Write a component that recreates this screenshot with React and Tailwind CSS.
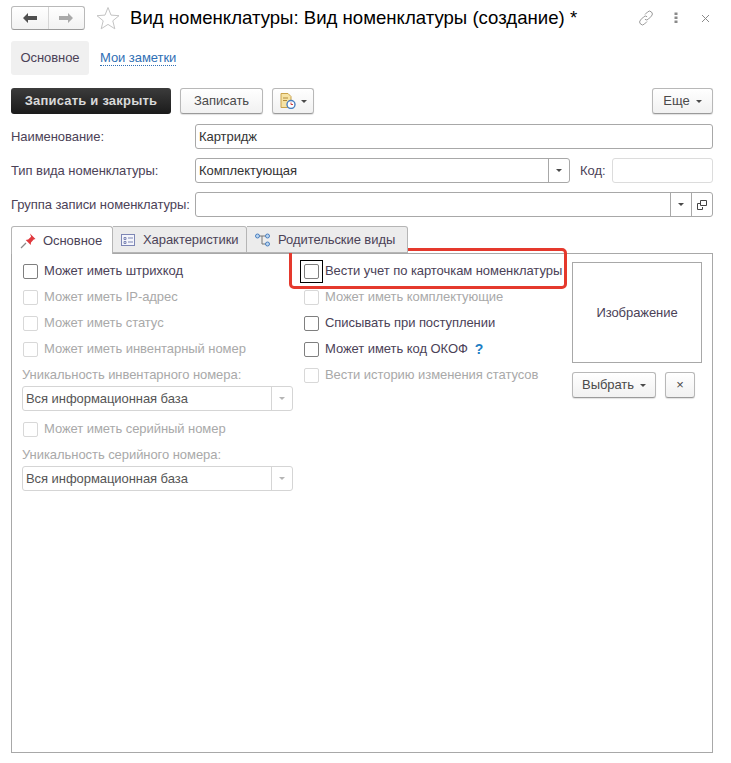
import React from "react";

const F = "font-['Liberation_Sans',Arial,sans-serif]";

const Caret = ({ c = "#4a4a4a" }) => (
  <svg width="6" height="3" viewBox="0 0 6 3"><path d="M0 0h6L3 3z" fill={c} /></svg>
);

function Check({ label, dim, focus, className = "" }) {
  return (
    <div className={"flex items-center h-[16px] " + className}>
      <span className="relative flex shrink-0">
        <span className={"block w-[15px] h-[15px] rounded-[2px] border bg-white " + (dim ? "border-[#d8d8d8]" : "border-[#7f7f7f]")} />
        {focus && <span className="absolute -left-[4px] -top-[4px] w-[23px] h-[23px] border border-black" />}
      </span>
      <span className={"ml-[6px] whitespace-nowrap " + (dim ? "text-[#a9a9a9]" : "text-[#4b4257]")}>{label}</span>
    </div>
  );
}

function Btn({ className = "", children }) {
  return (
    <div className={"flex items-center justify-center h-[26px] rounded-[3px] border border-[#b8b8b8] border-b-[#9a9a9a] bg-gradient-to-b from-white to-[#f1f1f1] text-[#4a4a4a] shadow-[0_1px_1px_rgba(0,0,0,0.12)] " + className}>
      {children}
    </div>
  );
}

function Select() {
  return (
    <div className="flex items-center w-[271px] h-[25px] border border-[#d5d5d5] rounded-[3px] bg-white mt-[3px] -ml-[1px]">
      <span className="flex-1 pl-[3px] text-[#555]">Вся информационная база</span>
      <span className="flex items-center justify-center w-[21px] h-full border-l border-[#d5d5d5]"><Caret c="#b5b5b5" /></span>
    </div>
  );
}

export default function App() {
  return (
    <div className={F + " relative w-[731px] h-[763px] bg-white text-[13px] tracking-[-0.06px] leading-[16px] text-[#4b4257] overflow-hidden pt-[6px]"}>
      {/* header */}
      <div className="flex items-center h-[24px] ml-[11px] mr-[21px]">
        <div className="flex w-[74px] h-[24px] rounded-[3px] border border-[#b9b9b9] border-b-[#9a9a9a] bg-gradient-to-b from-white to-[#f2f2f2]">
          <span className="flex flex-1 items-center justify-center border-r border-[#d6d6d6]">
            <svg width="14" height="10" viewBox="0 0 14 10"><path d="M0 5l5-5v3h9v4H5v3z" fill="#4f4f4f" /></svg>
          </span>
          <span className="flex flex-1 items-center justify-center">
            <svg width="14" height="10" viewBox="0 0 14 10"><path d="M14 5L9 0v3H0v4h9v3z" fill="#a9a9a9" /></svg>
          </span>
        </div>
        <svg className="ml-[11px]" width="24" height="24" viewBox="0 0 24 24"><path d="M12 1.5l3 7.6 8 .6-6.2 5.1 2 8-6.8-4.4-6.8 4.4 2-8L1 9.7l8-.6z" fill="#fff" stroke="#c4c4c4" /></svg>
        <span className="ml-[10px] text-[18.6px] tracking-normal leading-[24px] text-black whitespace-nowrap">Вид номенклатуры: Вид номенклатуры (создание) *</span>
        <svg className="ml-auto" width="16" height="16" viewBox="0 0 16 16" fill="none" stroke="#9a9a9a" strokeWidth="1"><path d="M7 4.5l2.5-2.5a2.6 2.6 0 0 1 4 4L10.5 9a2.6 2.6 0 0 1-3.6.3" /><path d="M9 11.5L6.5 14a2.6 2.6 0 0 1-4-4L5.5 7a2.6 2.6 0 0 1 3.6-.3" /></svg>
        <svg className="ml-[20px]" width="4" height="12" viewBox="0 0 4 12" fill="#8a8a8a"><rect x="0.5" y="0.5" width="3" height="2.5" /><rect x="0.5" y="4.5" width="3" height="2.5" /><rect x="0.5" y="8.5" width="3" height="2.5" /></svg>
        <svg className="ml-[23px]" width="9" height="9" viewBox="0 0 9 9" stroke="#8a8a8a" strokeWidth="1"><path d="M1 1l7 7M8 1L1 8" /></svg>
      </div>

      {/* nav */}
      <div className="flex items-center mt-[11px] ml-[11px]">
        <div className="flex items-center justify-center w-[78px] h-[34px] rounded-[3px] bg-[#f0f0f0]">Основное</div>
        <span className="ml-[11px] text-[#2f6fb5] border-b border-dotted border-[#2f6fb5] leading-[14px]">Мои заметки</span>
      </div>

      {/* command bar */}
      <div className="flex items-center mt-[13px] mr-[18px] ml-[11px]">
        <div className="flex items-center justify-center w-[160px] h-[26px] rounded-[3px] bg-gradient-to-b from-[#3c3c3c] to-[#1b1b1b] text-[#d9d9d9] font-bold tracking-[0.2px]">Записать и закрыть</div>
        <Btn className="w-[83px] ml-[9px]">Записать</Btn>
        <Btn className="w-[42px] ml-[9px] gap-[5px]">
          <svg width="16" height="16" viewBox="0 0 16 16"><path d="M1 .5h7l3 3v11H1z" fill="#f6e3a5" stroke="#c9a24a" /><path d="M3 5h5M3 7.5h4" stroke="#b08a3a" /><circle cx="11" cy="11.5" r="4" fill="#fff" stroke="#4a7fc0" strokeWidth="1.4" /><path d="M11 9.5v2h2" stroke="#d04040" fill="none" /></svg>
          <Caret />
        </Btn>
        <Btn className="w-[61px] ml-auto gap-[6px]">Еще <Caret /></Btn>
      </div>

      {/* form */}
      <div className="ml-[11px] w-[702px] mt-[10px] flex flex-col gap-[9px]">
        <div className="flex items-center">
          <span className="w-[184px]">Наименование:</span>
          <div className="flex-1 h-[25px] border border-[#a8a8a8] rounded-[3px] pl-[3px] flex items-center text-[#333]">Картридж</div>
        </div>
        <div className="flex items-center">
          <span className="w-[184px]">Тип вида номенклатуры:</span>
          <div className="flex items-center w-[375px] h-[25px] border border-[#a8a8a8] rounded-[3px]">
            <span className="flex-1 pl-[3px] text-[#333]">Комплектующая</span>
            <span className="flex items-center justify-center w-[21px] h-full border-l border-[#a8a8a8]"><Caret /></span>
          </div>
          <span className="ml-[10px] w-[32px]">Код:</span>
          <div className="flex-1 h-[25px] border border-[#dcdcdc] rounded-[3px]" />
        </div>
        <div className="flex items-center">
          <span className="w-[184px] whitespace-nowrap">Группа записи номенклатуры:</span>
          <div className="flex items-center flex-1 h-[25px] border border-[#a8a8a8] rounded-[3px]">
            <span className="flex-1" />
            <span className="flex items-center justify-center w-[21px] h-full border-l border-[#a8a8a8]"><Caret /></span>
            <span className="flex items-center justify-center w-[21px] h-full border-l border-[#a8a8a8]">
              <svg width="10" height="10" viewBox="0 0 10 10" fill="none" stroke="#444"><path d="M3.5 .5h6v5h-6z" /><path d="M3 3.5H.5v6h5V7" /></svg>
            </span>
          </div>
        </div>
      </div>

      {/* tabs */}
      <div className="ml-[11px] w-[702px] mt-[9px]">
        <div className="flex h-[27px] relative z-10">
          <div className="flex items-center w-[102px] h-[28px] border border-[#b5b5b5] border-b-0 rounded-t-[3px] bg-white pl-[8px]">
            <svg width="16" height="16" viewBox="0 0 16 16"><path d="M10 .5l5.5 5.5-1.8.6-2.7 2.9-.3 2.5-5-5 2.5-.5 2.9-2.7z" fill="#e0393e" /><path d="M6 10l-5 5" stroke="#8a8a8a" strokeWidth="1.2" /></svg>
            <span className="ml-[7px]">Основное</span>
          </div>
          <div className="flex items-center w-[134px] border border-[#b5b5b5] border-l-0 rounded-tr-[3px] bg-[#ececec] pl-[8px]">
            <svg width="14" height="12" viewBox="0 0 14 12" fill="none"><rect x=".5" y=".5" width="13" height="11" stroke="#7d86b5" fill="#f4f5fb" /><path d="M3 3.5h2v2H3zM3 7.5h2v2H3z" stroke="#7d86b5" /><path d="M7 4h5M7 8h5" stroke="#7d86b5" /></svg>
            <span className="ml-[8px]">Характеристики</span>
          </div>
          <div className="flex items-center w-[161px] border border-[#b5b5b5] border-l-0 rounded-tr-[3px] bg-[#ececec] pl-[8px]">
            <svg width="16" height="14" viewBox="0 0 16 14" fill="none"><path d="M2 3h10M7 3v8h5" stroke="#777" /><circle cx="2.5" cy="3" r="2" fill="#bcd6ee" stroke="#4a7fc0" /><circle cx="12.5" cy="3" r="2" fill="#bcd6ee" stroke="#4a7fc0" /><circle cx="12.5" cy="11" r="2" fill="#bcd6ee" stroke="#4a7fc0" /></svg>
            <span className="ml-[7px]">Родительские виды</span>
          </div>
        </div>
        <div className="flex w-[702px] h-[500px] border border-[#a8a8a8] pl-[11px] pt-[9px]">
          <div className="w-[281px]">
            <Check label="Может иметь штрихкод" />
            <Check label="Может иметь IP-адрес" dim className="mt-[10px]" />
            <Check label="Может иметь статус" dim className="mt-[10px]" />
            <Check label="Может иметь инвентарный номер" dim className="mt-[10px]" />
            <div className="text-[#a9a9a9] mt-[10px] -ml-[1px]">Уникальность инвентарного номера:</div>
            <Select />
            <Check label="Может иметь серийный номер" dim className="mt-[10px]" />
            <div className="text-[#a9a9a9] mt-[10px] -ml-[1px]">Уникальность серийного номера:</div>
            <Select />
          </div>
          <div className="w-[268px]">
            <Check label="Вести учет по карточкам номенклатуры" focus />
            <Check label="Может иметь комплектующие" dim className="mt-[10px]" />
            <Check label="Списывать при поступлении" className="mt-[10px]" />
            <div className="flex items-center mt-[10px]">
              <Check label="Может иметь код ОКОФ" />
              <span className="ml-[7px] text-[14px] text-[#1f7fc4] font-bold">?</span>
            </div>
            <Check label="Вести историю изменения статусов" dim className="mt-[10px]" />
          </div>
          <div className="w-[130px] -mt-[1px]">
            <div className="flex items-center justify-center w-[130px] h-[101px] border border-[#a8a8a8]">Изображение</div>
            <div className="flex mt-[9px] gap-[9px]">
              <Btn className="w-[84px] gap-[6px]">Выбрать <Caret /></Btn>
              <Btn className="w-[30px]">×</Btn>
            </div>
          </div>
        </div>
      </div>

      {/* annotation */}
      <div className="absolute left-[289px] top-[248px] w-[278px] h-[41px] border-[3px] border-[#e5392d] rounded-[5px]" />
    </div>
  );
}
